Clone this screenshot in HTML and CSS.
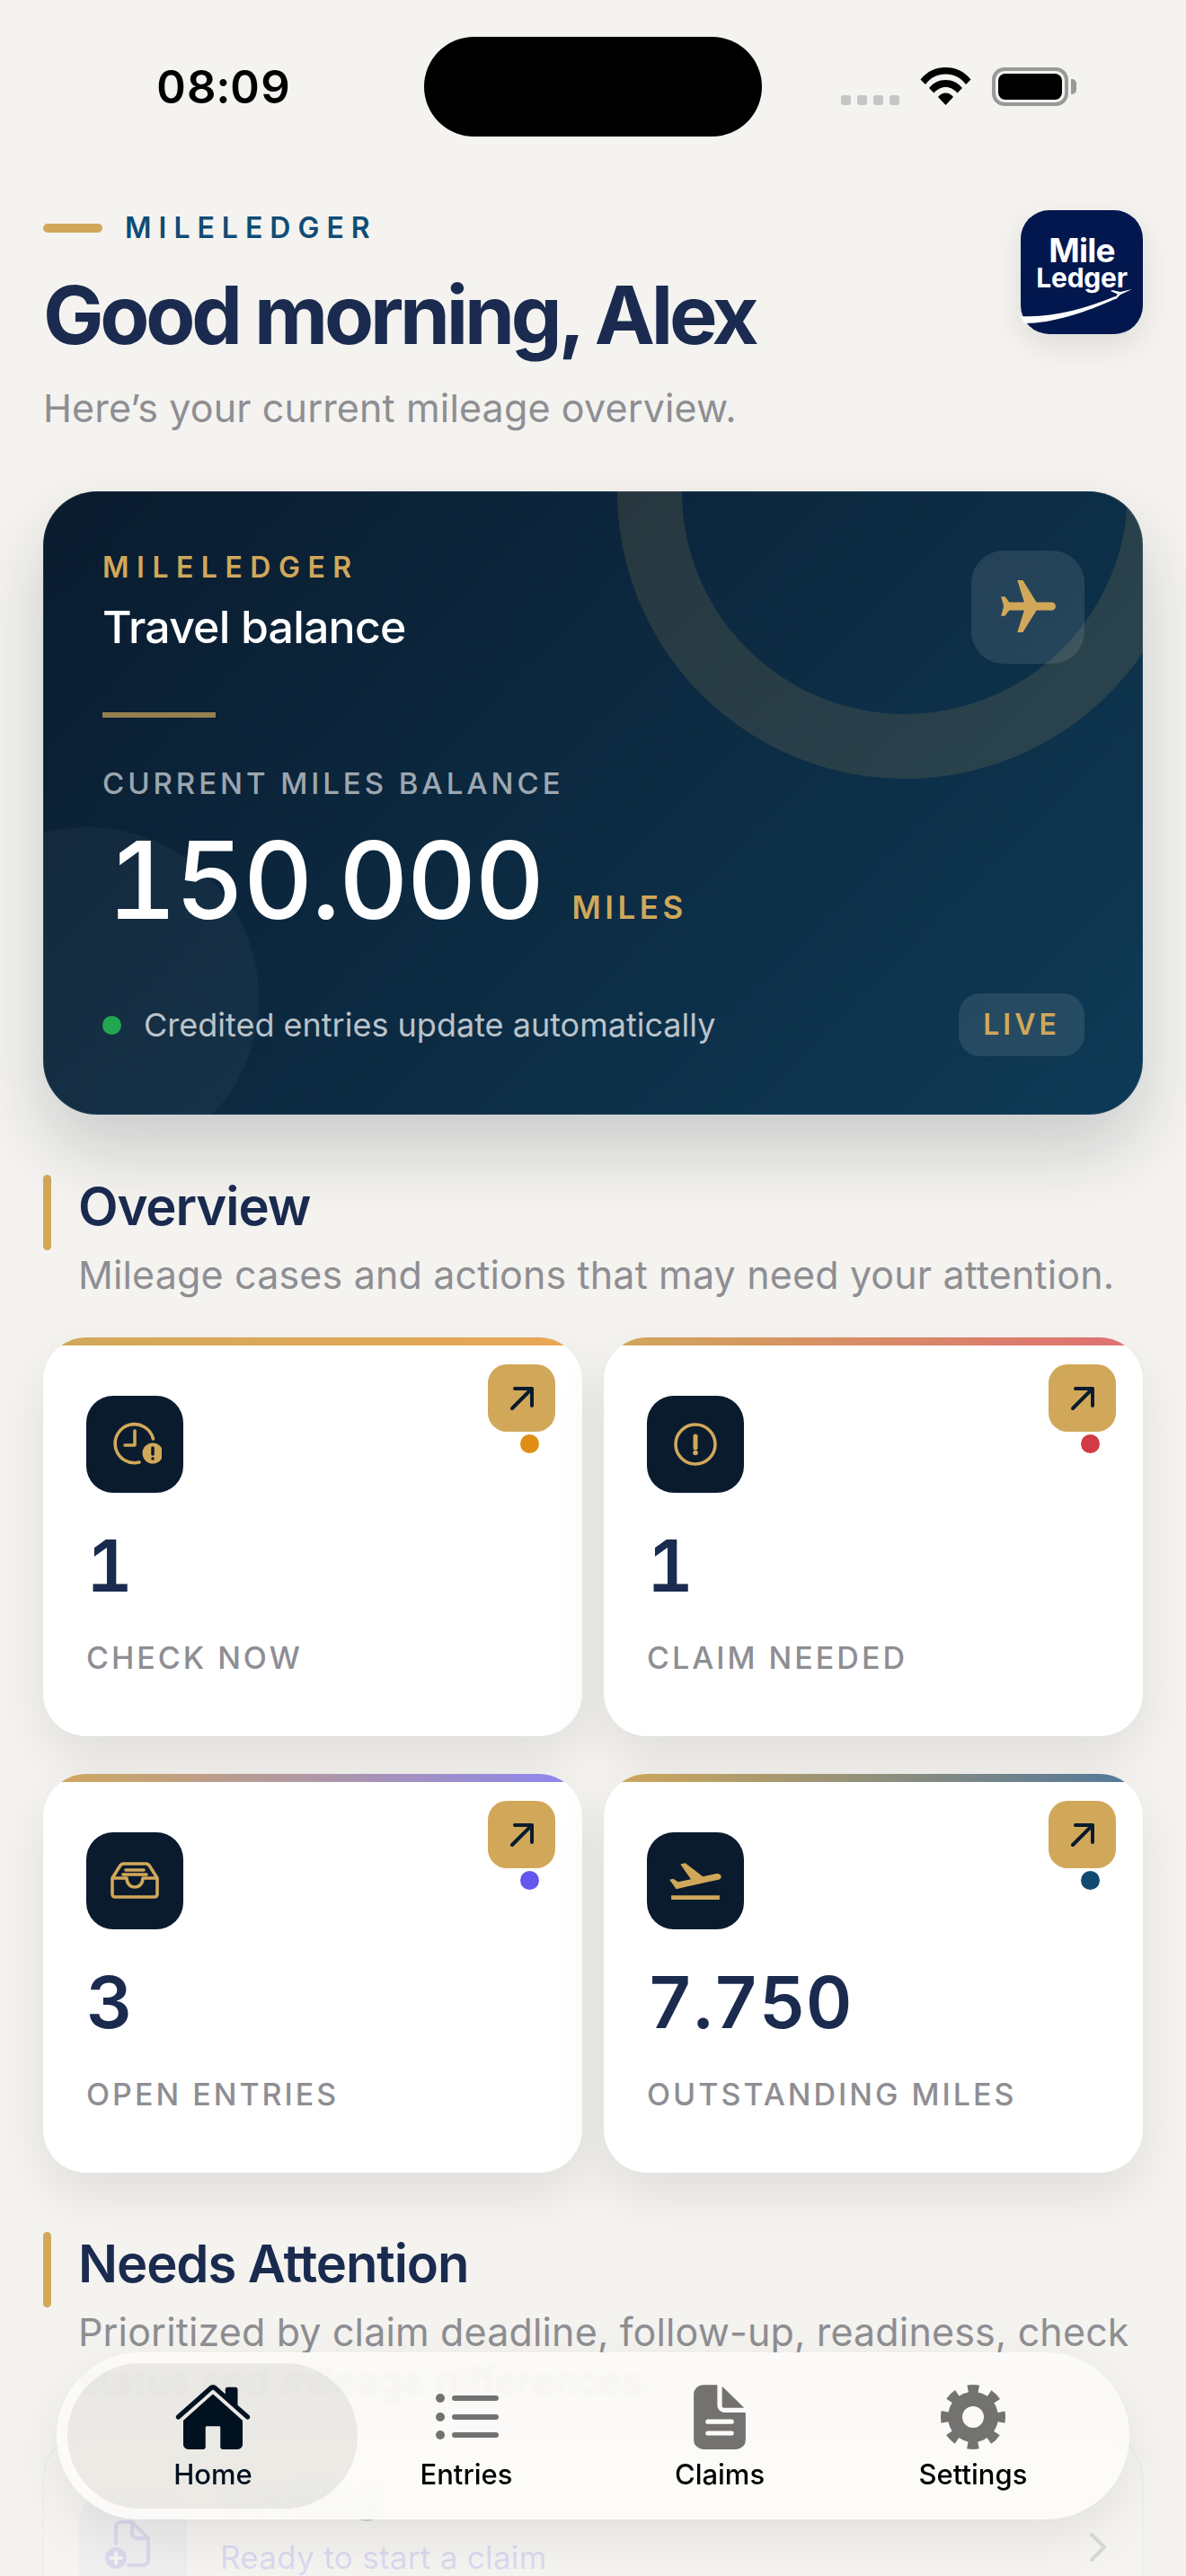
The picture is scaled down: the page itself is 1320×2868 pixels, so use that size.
FILE: index.html
```html
<!doctype html>
<html>
<head>
    <meta charset="utf-8">
    <title>MileLedger</title>
    <link rel="stylesheet" href="styles.css">
</head>

<body>
<div class="status-bar">
    <span class="status-time">08:09</span>
    <div class="status-island"></div>
    <div class="status-icons">
        <div class="signal"><i></i><i></i><i></i><i></i></div>
        <svg class="wifi" width="57" height="42" viewBox="0 0 57 42"><path d="M0.5 13.5C8 4 18 0 28.5 0C39 0 49 4 56.5 13.5L51 19C45 11 37 7.5 28.5 7.5C20 7.5 12 11 6 19Z"/><path d="M10 23C15 17 21 14 28.5 14C36 14 42 17 47 23L41.5 28.5C38 24.5 33.5 22 28.5 22C23.5 22 19 24.5 15.5 28.5Z"/><path d="M20 33C22 30.5 25 28.5 28.5 28.5C32 28.5 35 30.5 37 33L28.5 42Z"/></svg>
        <div class="battery"><div class="battery-fill"></div></div>
    </div>
</div>

<div class="page-header">
    <div>
        <div class="eyebrow"><span class="eyebrow-bar"></span>MILELEDGER</div>
        <h1>Good morning, Alex</h1>
        <p class="intro">Here’s your current mileage overview.</p>
    </div>
    <div class="logo">
        <span class="logo-mile">Mile</span>
        <span class="logo-ledger">Ledger</span>
        <svg class="logo-swoosh" width="136" height="138" viewBox="0 0 136 138"><path d="M0 118C35 120 70 110 105 96L107 98C72 114 35 126 4 126Z"/><path d="M124 88L111 94L106 99L104 98.5L108 93.5L100 90L102 89L111 91Z"/></svg>
    </div>
</div>

<div class="hero">
    <div class="hero-ring"></div>
    <div class="hero-circle"></div>
    <div class="hero-plane">
        <svg width="73" height="73" viewBox="0 0 24 24"><path transform="rotate(90 12 12)" d="M21 16v-2l-8-5V3.5c0-.83-.67-1.5-1.5-1.5S10 2.67 10 3.5V9l-8 5v2l8-2.5V19l-2 1.5V22l3.5-1 3.5 1v-1.5L13 19v-5.5l8 2.5z"/></svg>
    </div>
    <div class="hero-brand">MILELEDGER</div>
    <div class="hero-title">Travel balance</div>
    <div class="hero-rule"></div>
    <div class="hero-label">CURRENT MILES BALANCE</div>
    <div class="hero-amount"><span class="hero-number">150.000</span><span class="hero-unit">MILES</span></div>
    <div class="hero-footer">
        <div class="hero-note"><span class="hero-dot"></span>Credited entries update automatically</div>
        <span class="hero-live">LIVE</span>
    </div>
</div>

<div class="section-head">
    <span class="section-bar"></span>
    <h2>Overview</h2>
    <p>Mileage cases and actions that may need your attention.</p>
</div>

<div class="stats">
    <div class="stat stat-amber">
        <div class="stat-go"><svg width="36" height="36" viewBox="0 0 36 36"><path d="M7 29L29 7M10 7H29V26"/></svg></div>
        <span class="stat-dot"></span>
        <div class="stat-icon">
            <svg width="60" height="60" viewBox="0 0 60 60"><path class="line" d="M50.5 24A21.5 21.5 0 1 0 35 50M30 15V31H19"/><circle class="solid" cx="50" cy="40" r="11.5"/><path class="cut" d="M50 34V41"/><circle class="dark" cx="50" cy="46" r="1.8"/></svg>
        </div>
        <div class="stat-value">1</div>
        <div class="stat-label">CHECK NOW</div>
    </div>
    <div class="stat stat-red">
        <div class="stat-go"><svg width="36" height="36" viewBox="0 0 36 36"><path d="M7 29L29 7M10 7H29V26"/></svg></div>
        <span class="stat-dot"></span>
        <div class="stat-icon">
            <svg width="60" height="60" viewBox="0 0 60 60"><circle class="line" cx="30" cy="30" r="22"/><path class="line mark" d="M30 21V34"/><circle class="solid" cx="30" cy="39.500" r="2.800"/></svg>
        </div>
        <div class="stat-value">1</div>
        <div class="stat-label">CLAIM NEEDED</div>
    </div>
    <div class="stat stat-violet">
        <div class="stat-go"><svg width="36" height="36" viewBox="0 0 36 36"><path d="M7 29L29 7M10 7H29V26"/></svg></div>
        <span class="stat-dot"></span>
        <div class="stat-icon">
            <svg width="60" height="60" viewBox="0 0 60 60"><path class="line" d="M5 27L13.5 13.5A5 5 0 0 1 17.5 11H42.500A5 5 0 0 1 46.500 13.500L55 27V45A3 3 0 0 1 52 48H8A3 3 0 0 1 5 45ZM5 27H21C21 33 25 37 30 37C35 37 39 33 39 27H55M20 18H40M17 23H43"/></svg>
        </div>
        <div class="stat-value">3</div>
        <div class="stat-label">OPEN ENTRIES</div>
    </div>
    <div class="stat stat-navy">
        <div class="stat-go"><svg width="36" height="36" viewBox="0 0 36 36"><path d="M7 29L29 7M10 7H29V26"/></svg></div>
        <span class="stat-dot"></span>
        <div class="stat-icon">
            <svg width="68" height="56" viewBox="0 0 24 24" preserveAspectRatio="none"><path class="solid" d="M2.500 19h19v2h-19zm19.570-9.360c-.21-.8-1.040-1.280-1.840-1.060L14.920 10l-6.900-6.430-1.930.51 4.140 7.170-4.970 1.330-1.970-1.540-1.450.39 1.820 3.160.77 1.330 1.600-.43 5.310-1.420 4.350-1.160L21 11.490c.81-.23 1.280-1.050 1.070-1.850z"/></svg>
        </div>
        <div class="stat-value">7.750</div>
        <div class="stat-label">OUTSTANDING MILES</div>
    </div>
</div>

<div class="section-head section-next">
    <span class="section-bar"></span>
    <h2>Needs Attention</h2>
    <p>Prioritized by claim deadline, follow-up, readiness, check status and mileage differences.</p>
</div>

<div class="attention">
    <div class="attention-icon">
        <svg width="72" height="60" viewBox="0 0 72 60"><path d="M17 26V8A6 6 0 0 1 23 2H35L53 20V44A6 6 0 0 1 47 50H31M35 2V14A6 6 0 0 0 41 20H53"/><circle class="plus-back" cx="17" cy="42" r="12"/><path class="plus" d="M17 36V48M11 42H23"/></svg>
    </div>
    <div class="attention-text">
        <div class="attention-title">Booking</div>
        <div class="attention-sub">Ready to start a claim</div>
    </div>
    <svg class="attention-more" width="20" height="32" viewBox="0 0 20 32"><path d="M3 2L17 16L3 30"/></svg>
</div>

<div class="tabbar">
    <div class="tab tab-active">
        <svg width="88" height="82" viewBox="0 0 512 512" preserveAspectRatio="none"><path d="M261.560 101.280a8 8 0 00-11.060 0L66.400 277.150a8 8 0 00-2.470 5.790L63.900 448a32 32 0 0032 32H192a16 16 0 0016-16V328a8 8 0 018-8h80a8 8 0 018 8v136a16 16 0 0016 16h96.060a32 32 0 0032-32V282.940a8 8 0 00-2.470-5.790z"/><path d="M490.910 244.150l-74.800-71.560V64a16 16 0 00-16-16h-48a16 16 0 00-16 16v32l-57.920-55.380C272.770 35.140 264.710 32 256 32c-8.680 0-16.720 3.140-22.140 8.630l-212.700 203.500c-6.220 6-7 15.870-1.340 22.370A16 16 0 0043 267.560L250.500 69.280a8 8 0 0111.060 0l207.520 198.280a16 16 0 0022.590-.44c6.140-6.360 5.630-16.860-.76-22.970z"/></svg>
        <span>Home</span>
    </div>
    <div class="tab">
        <svg class="tab-list" width="88" height="82" viewBox="0 0 88 82"><path d="M31 20H77M31 41H77M31 61H77"/><circle cx="15" cy="20" r="5"/><circle cx="15" cy="41" r="5"/><circle cx="15" cy="61" r="5"/></svg>
        <span>Entries</span>
    </div>
    <div class="tab">
        <svg width="84" height="82" viewBox="0 0 512 512" preserveAspectRatio="none"><path d="M428 224H288a48 48 0 01-48-48V36a4 4 0 00-4-4h-92a64 64 0 00-64 64v320a64 64 0 0064 64h224a64 64 0 0064-64V228a4 4 0 00-4-4zm-92 160H176a16 16 0 010-32h160a16 16 0 010 32zm0-80H176a16 16 0 010-32h160a16 16 0 010 32z"/><path d="M419.220 188.590L275.410 44.780a2 2 0 00-3.410 1.410V176a16 16 0 0016 16h129.810a2 2 0 001.410-3.410z"/></svg>
        <span>Claims</span>
    </div>
    <div class="tab">
        <svg class="tab-gear" width="88" height="82" viewBox="-8 -5 88 82"><circle class="gear-body" cx="36" cy="36" r="20"/><circle class="gear-teeth" cx="36" cy="36" r="31.500"/></svg>
        <span>Settings</span>
    </div>
</div>
</body>

</html>
```

FILE: styles.css
```css
* {box-sizing: border-box;}
html, body {height: 2868px; overflow: hidden;}
body {margin: 0; padding: 0 48px; background: #f4f3ef; font-family: "Inter", "Liberation Sans", sans-serif; color: #1a2b4f; position: relative;}
h1, h2, p {margin: 0;}

/* status bar */
.status-bar {display: grid; grid-template-columns: 376px 376px 1fr; padding-top: 41px; margin: 0 -48px; padding-left: 96px; align-items: center;}
.status-time {font-size: 51px; font-weight: 600; font-variant-numeric: tabular-nums; letter-spacing: .8px; color: #000; line-height: 111px; padding-left: 78px;}
.status-island {width: 376px; height: 111px; border-radius: 56px; background: #000;}
.status-icons {display: flex; align-items: flex-end; padding-left: 88px; height: 43px; margin-top: -1px;}
.signal {display: flex; gap: 7px; margin-right: 23px; padding-bottom: 1px;}
.signal i {display: block; width: 11px; height: 11px; border-radius: 3px; background: #c6c6c6;}
.wifi {fill: #000; display: block; margin-right: 23px; margin-bottom: 1px;}
.battery {width: 85px; height: 43px; padding: 3px; border: 4px solid #999; border-radius: 14px; position: relative;}
.battery::after {content: ""; position: absolute; right: -13px; top: 9px; width: 6px; height: 17px; border-radius: 0 5px 5px 0; background: #999;}
.battery-fill {height: 100%; border-radius: 8px; background: #000;}

/* greeting */
.page-header {display: flex; justify-content: space-between; align-items: flex-start; margin-top: 82px;}
.eyebrow {display: flex; align-items: center; font-size: 32px; line-height: 40px; font-weight: 600; letter-spacing: 8px; color: #0f4c75;}
.eyebrow-bar {width: 66px; height: 10px; border-radius: 5px; background: #d1a85a; margin-right: 25px;}
h1 {font-size: 90px; line-height: 104px; font-weight: 700; letter-spacing: -4.2px; margin-top: 25px;}
.intro {font-size: 43px; line-height: 56px; letter-spacing: .15px; color: #8e8e93; margin-top: 23px;}
.logo {width: 136px; height: 138px; border-radius: 32px; background: #02174d; position: relative; display: flex; flex-direction: column; align-items: center; padding-top: 28px; color: #fff; font-weight: 700; box-shadow: 0 12px 36px rgba(0, 0, 0, .1);}
.logo-mile {font-size: 37px; line-height: 34px; letter-spacing: -.8px;}
.logo-ledger {font-size: 30px; line-height: 27px; letter-spacing: -.2px;}
.logo-swoosh {position: absolute; left: 0; top: 0; fill: #fff;}

/* balance card */
.hero {position: relative; overflow: hidden; margin-top: 65px; height: 694px; padding: 66px 66px 0; border-radius: 60px; background: linear-gradient(135deg, #0a1b2e 0%, #0e3a56 100%); box-shadow: 0 40px 80px rgba(10, 27, 46, .18), inset 0 0 0 1px rgba(255, 255, 255, .08);}
.hero > div {position: relative;}
.hero .hero-ring {position: absolute; left: 639px; top: -320px; width: 640px; height: 640px; border-radius: 50%; border: 72px solid rgba(209, 168, 90, .14);}
.hero .hero-circle {position: absolute; left: -140px; top: 374px; width: 380px; height: 380px; border-radius: 50%; background: rgba(255, 255, 255, .04);}
.hero .hero-plane {position: absolute; top: 66px; right: 65px; width: 126px; height: 126px; border-radius: 36px; background: rgba(255, 255, 255, .1); display: flex; align-items: center; justify-content: center;}
.hero-plane svg {fill: #d1a85a;}
.hero-brand {font-size: 32px; line-height: 38px; font-weight: 600; letter-spacing: 8.500px; color: #d1a85a;}
.hero-title {font-size: 50px; line-height: 60px; font-weight: 500; letter-spacing: -.8px; color: #fff; margin-top: 17px;}
.hero-rule {width: 126px; height: 6px; background: rgba(209, 168, 90, .7); margin-top: 65px;}
.hero-label {font-size: 33px; line-height: 40px; font-weight: 500; letter-spacing: 3.950px; color: rgba(255, 255, 255, .62); margin-top: 53px;}
.hero-amount {display: flex; align-items: baseline; margin-top: 23px; padding-left: 5px;}
.hero-number {font-size: 120px; line-height: 130px; font-weight: 500; font-variant-numeric: tabular-nums; letter-spacing: -1.9px; color: #fff;}
.hero-unit {font-size: 35px; font-weight: 600; letter-spacing: 4.500px; color: #d1a85a; margin-left: 32px;}
.hero-footer {display: flex; justify-content: space-between; align-items: center; margin-top: 61px;}
.hero-note {display: flex; align-items: center; font-size: 36px; color: rgba(255, 255, 255, .72);}
.hero-dot {width: 21px; height: 21px; border-radius: 50%; background: #22a652; margin-right: 25px;}
.hero-live {width: 140px; height: 70px; border-radius: 24px; background: rgba(255, 255, 255, .1); font-size: 32px; line-height: 70px; font-weight: 600; letter-spacing: 4px; color: #d1a85a; text-align: center; margin-right: -1px;}

/* section headings */
.section-head {display: grid; grid-template-columns: 9px 1fr; column-gap: 30px; margin-top: 67px;}
.section-next {margin-top: 66px;}
.section-bar {height: 84px; border-radius: 5px; background: #d1a85a;}
.section-head h2 {font-size: 58px; line-height: 70px; font-weight: 600; letter-spacing: -1.1px;}
.section-head p {grid-column: 2; font-size: 43px; line-height: 55px; letter-spacing: .15px; color: #8e8e93;}

/* stat tiles */
.stats {display: grid; grid-template-columns: 600px 600px; gap: 42px 24px; margin-top: 42px;}
.stat {position: relative; overflow: hidden; height: 444px; padding: 65px 48px 0; border-radius: 48px; background: #fff; box-shadow: 0 24px 60px rgba(0, 0, 0, .085);}
.stat::before {content: ""; position: absolute; left: 0; right: 0; top: 0; height: 9px;}
.stat-amber::before {background: linear-gradient(90deg, #d1a85a, #e8a855);}
.stat-red::before {background: linear-gradient(90deg, #d1a85a, #df6f73);}
.stat-violet::before {background: linear-gradient(90deg, #d1a85a, #8c85f2);}
.stat-navy::before {background: linear-gradient(90deg, #d1a85a, #50779c);}
.stat-go {position: absolute; top: 30px; right: 30px; width: 75px; height: 75px; border-radius: 21px; background: #d1a85a; display: flex; align-items: center; justify-content: center;}
.stat-go svg {fill: none; stroke: #0a1b2e; stroke-width: 4; stroke-linecap: round; stroke-linejoin: round;}
.stat-dot {position: absolute; top: 108px; right: 48px; width: 21px; height: 21px; border-radius: 50%;}
.stat-amber .stat-dot {background: #e08e14;}
.stat-red .stat-dot {background: #d13b45;}
.stat-violet .stat-dot {background: #6357f0;}
.stat-navy .stat-dot {background: #104a73;}
.stat-icon {width: 108px; height: 108px; border-radius: 30px; background: #0a1b2e; display: flex; align-items: center; justify-content: center;}
.stat-icon .line {fill: none; stroke: #d1a85a; stroke-width: 3.6; stroke-linecap: round; stroke-linejoin: round;}
.stat-icon .mark {stroke-width: 5;}
.stat-icon .solid {fill: #d1a85a;}
.stat-icon .cut {fill: none; stroke: #0a1b2e; stroke-width: 3.6; stroke-linecap: round;}
.stat-icon .dark {fill: #0a1b2e;}
.stat-value {font-size: 80px; line-height: 90px; font-weight: 600; font-variant-numeric: tabular-nums; margin-top: 36px;}
.stat-label {font-size: 34px; line-height: 44px; font-weight: 500; letter-spacing: 3px; color: #8e8e93; margin-top: 36px;}

/* first entry in the attention list, most of it sits under the tab bar */
.attention {display: flex; align-items: flex-start; margin-top: 32px; height: 300px; padding: 43px 39px 0; border-radius: 48px; background: #fff; border: 1px solid rgba(99, 87, 240, .5); opacity: .16;}
.attention-icon {width: 120px; height: 120px; margin-top: 21px; border-radius: 30px; background: #e0dff5; display: flex; align-items: center; justify-content: center; flex-shrink: 0;}
.attention-icon svg {fill: none; stroke: #6357f0; stroke-width: 4; stroke-linecap: round; stroke-linejoin: round;}
.attention-icon .plus-back {fill: #6357f0; stroke: none;}
.attention-icon .plus {stroke: #fff; stroke-width: 3.5;}
.attention-text {flex: 1; padding-left: 37px;}
.attention-title {font-size: 45px; line-height: 52px; font-weight: 600;}
.attention-sub {font-size: 35px; line-height: 44px; letter-spacing: .3px; color: #6357f0; margin-top: 18px;}
.attention-more {fill: none; stroke: #555; stroke-width: 4; stroke-linecap: round; stroke-linejoin: round; margin-top: 65px;}

/* floating tab bar */
.tabbar {position: absolute; left: 63px; top: 2619px; width: 1194px; height: 186px; padding: 0 33px; border-radius: 93px; display: flex; background: rgba(252, 251, 248, .92); backdrop-filter: blur(3px); box-shadow: 0 22px 60px rgba(0, 0, 0, .08);}
.tab {position: relative; width: 282px; display: flex; flex-direction: column; align-items: center; padding-top: 31px; font-size: 31px; font-weight: 500; color: #000; fill: #737270;}
.tab svg {display: block; position: relative;}
.tab span {position: relative; line-height: 40px; margin-top: 3px;}
.tab-active {fill: #021120; color: #021120;}
.tab-active::before {content: ""; position: absolute; left: -21px; right: -20px; top: 12px; height: 162px; border-radius: 81px; background: rgba(60, 50, 30, .09);}
.tab-list path {fill: none; stroke: #737270; stroke-width: 6; stroke-linecap: round;}
.gear-body {fill: none; stroke: #737270; stroke-width: 16;}
.gear-teeth {fill: none; stroke: #737270; stroke-width: 9; stroke-dasharray: 12 12.740; stroke-dashoffset: 6;}
```
